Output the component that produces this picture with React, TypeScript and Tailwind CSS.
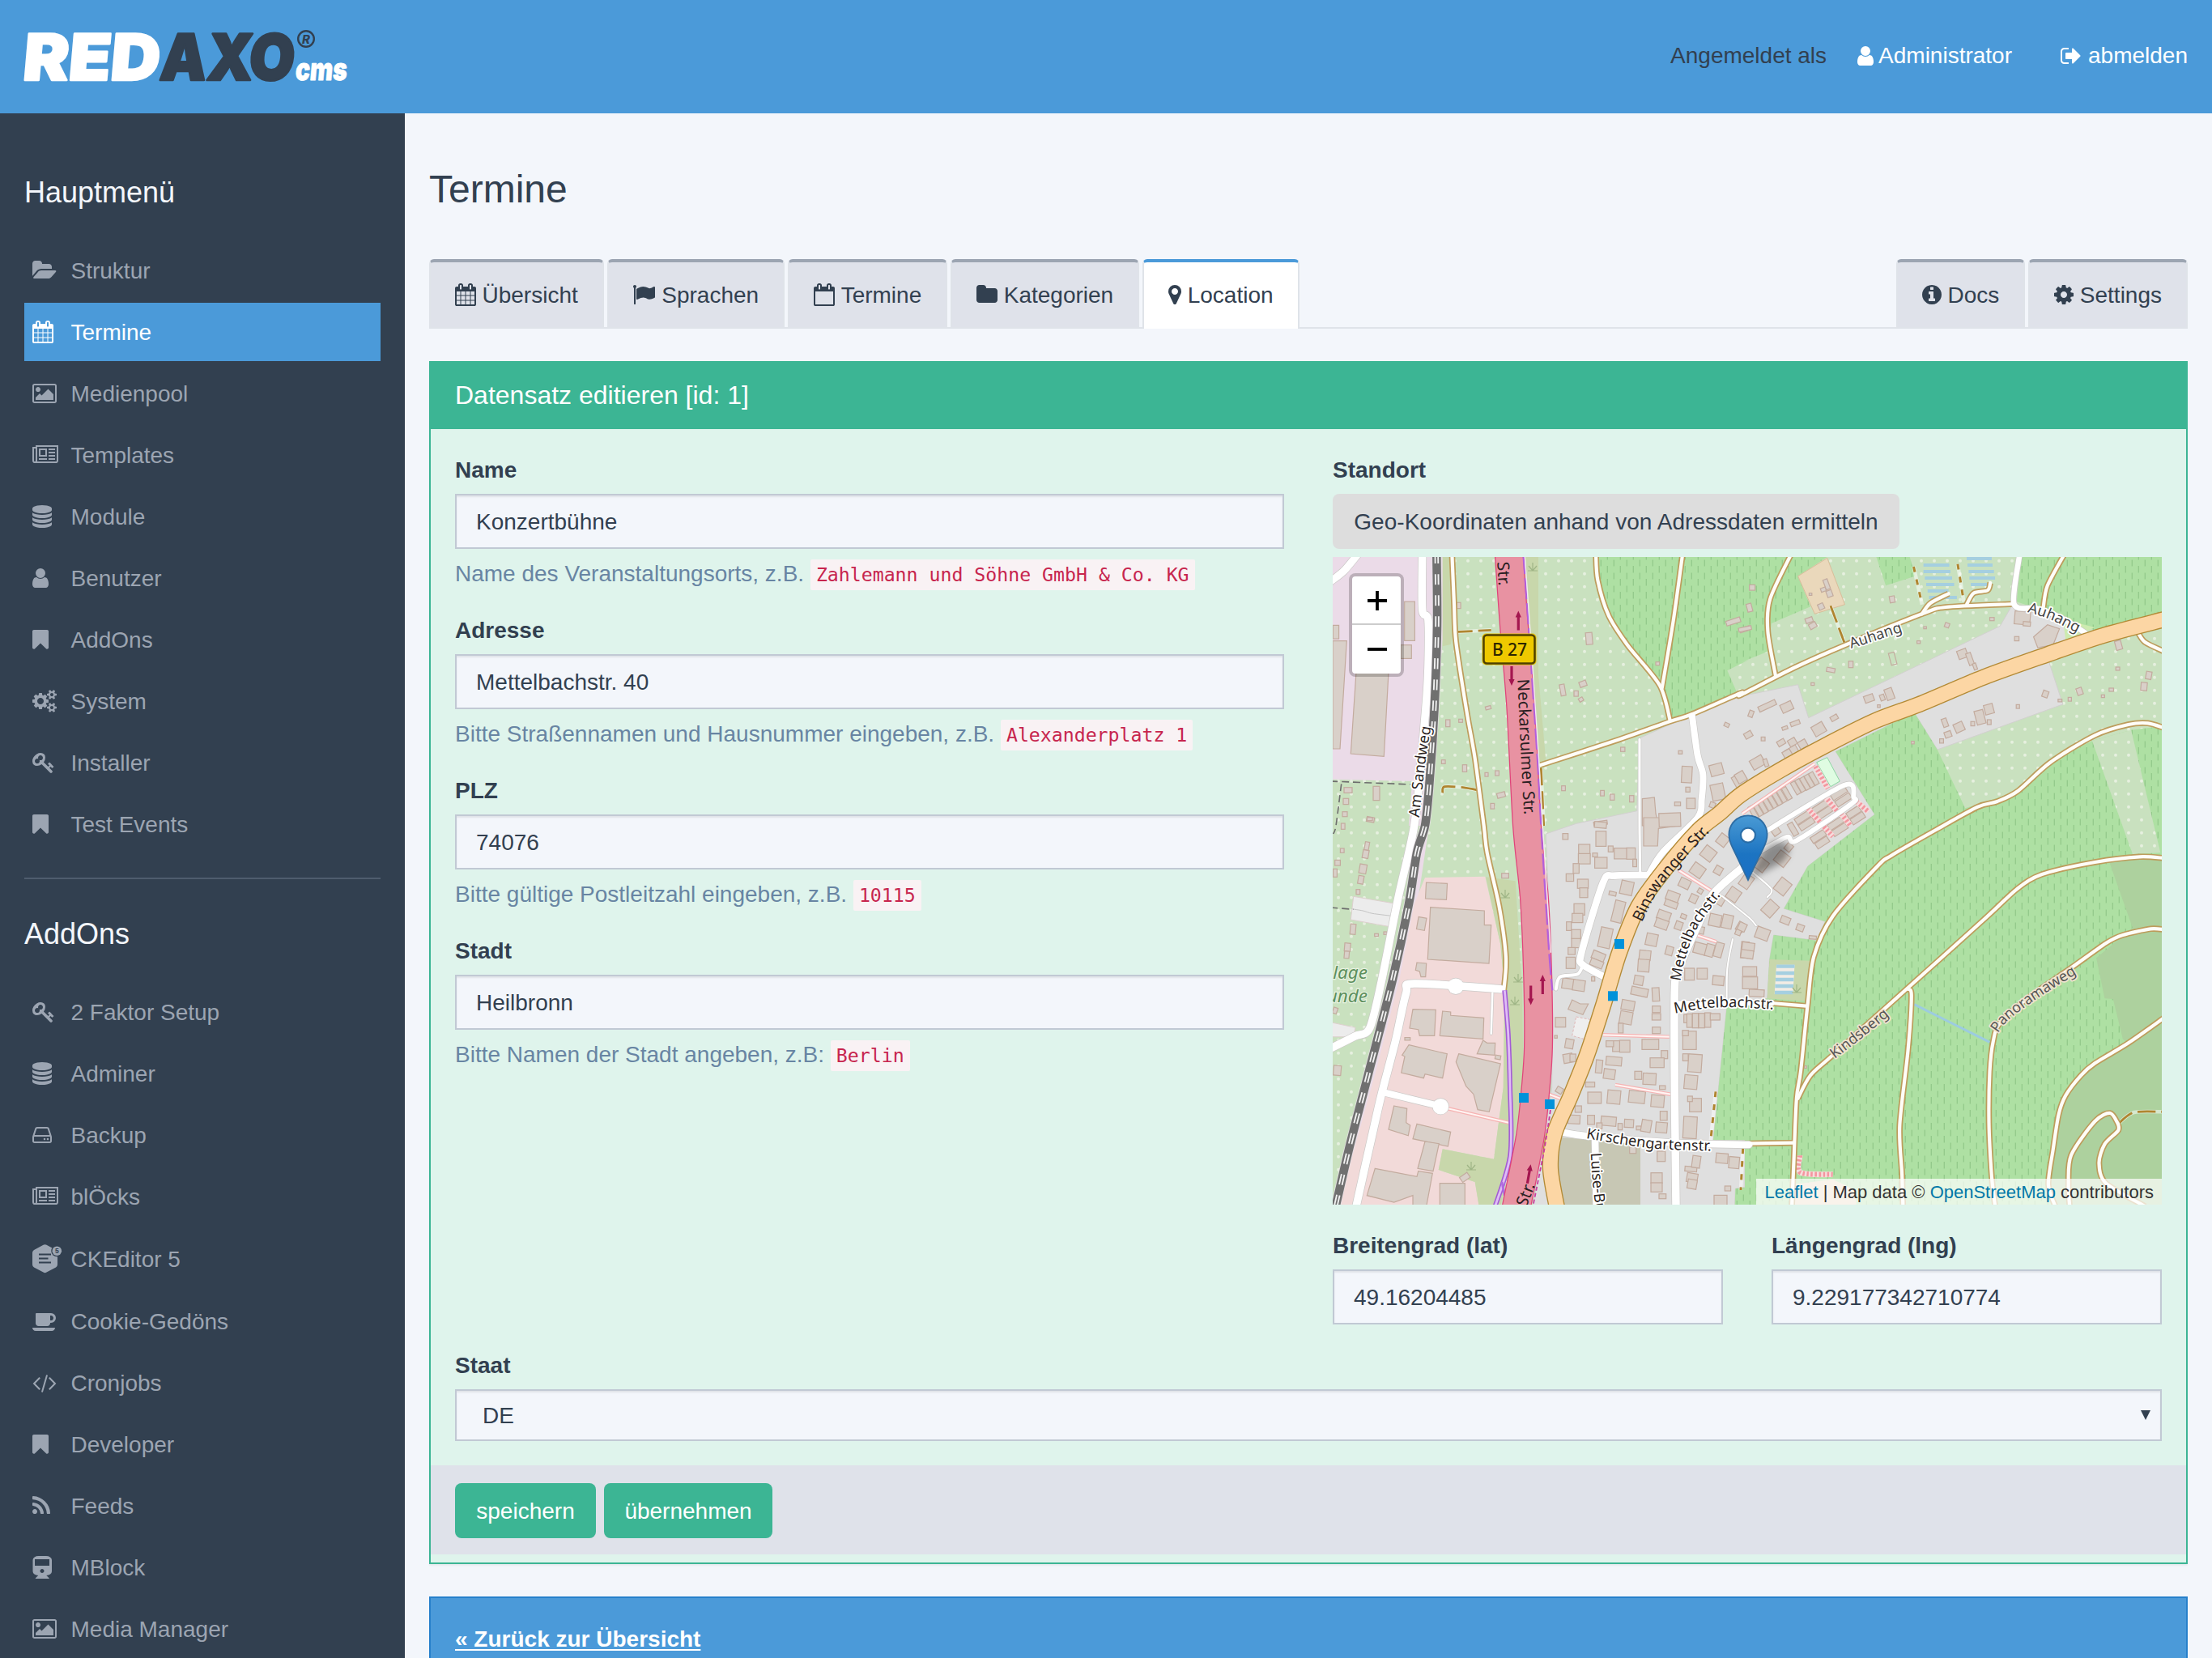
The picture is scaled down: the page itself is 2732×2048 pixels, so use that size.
import React from "react";

/* ------------------------------------------------------------------ */
/* Icons: one design unit is 1/64 px at the 28px base size             */
/* ------------------------------------------------------------------ */

type IconName =
  | "folderOpen" | "calendar" | "calendarO" | "image" | "newspaper" | "database" | "user" | "bookmark"
  | "cogs" | "key" | "hdd" | "coffee" | "code" | "rss" | "train" | "folder" | "flag" | "marker"
  | "info" | "cog" | "signOut";

const ICONS: Record<IconName, { x: number; w: number; d: string }> = {
  folderOpen: { x: 64, w: 1920, d: "M1943 952q0 31-31 66l-336 396q-43 51-120.5 86.5t-143.5 35.5h-1088q-34 0-60.5-13t-26.5-43q0-31 31-66l336-396q43-51 120.5-86.5t143.5-35.5h1088q34 0 60.5 13t26.5 43zm-343-344v160h-832q-94 0-197 47.5t-164 119.5l-337 396-5 6q0-4-.5-12.5t-.5-12.5v-960q0-92 66-158t158-66h320q92 0 158 66t66 158v32h544q92 0 158 66t66 158z" },
  calendar: { x: 64, w: 1664, d: "M192 1664h288v-288h-288v288zm352 0h320v-288h-320v288zm-352-352h288v-320h-288v320zm352 0h320v-320h-320v320zm-352-384h288v-288h-288v288zm736 736h320v-288h-320v288zm-384-736h320v-288h-320v288zm768 736h288v-288h-288v288zm-384-352h320v-320h-320v320zm-352-864v-288q0-13-9.5-22.5t-22.5-9.5h-64q-13 0-22.5 9.5t-9.5 22.5v288q0 13 9.5 22.5t22.5 9.5h64q13 0 22.5-9.5t9.5-22.5zm736 864h288v-320h-288v320zm-384-384h320v-288h-320v288zm384 0h288v-288h-288v288zm32-480v-288q0-13-9.5-22.5t-22.5-9.5h-64q-13 0-22.5 9.5t-9.5 22.5v288q0 13 9.5 22.5t22.5 9.5h64q13 0 22.5-9.5t9.5-22.5zm384-64v1280q0 52-38 90t-90 38h-1408q-52 0-90-38t-38-90v-1280q0-52 38-90t90-38h128v-96q0-66 47-113t113-47h64q66 0 113 47t47 113v96h384v-96q0-66 47-113t113-47h64q66 0 113 47t47 113v96h128q52 0 90 38t38 90z" },
  calendarO: { x: 64, w: 1664, d: "M192 1664h1408v-1024h-1408v1024zm384-1216v-288q0-14-9-23t-23-9h-64q-14 0-23 9t-9 23v288q0 14 9 23t23 9h64q14 0 23-9t9-23zm768 0v-288q0-14-9-23t-23-9h-64q-14 0-23 9t-9 23v288q0 14 9 23t23 9h64q14 0 23-9t9-23zm384-64v1280q0 52-38 90t-90 38h-1408q-52 0-90-38t-38-90v-1280q0-52 38-90t90-38h128v-96q0-66 47-113t113-47h64q66 0 113 47t47 113v96h384v-96q0-66 47-113t113-47h64q66 0 113 47t47 113v96h128q52 0 90 38t38 90z" },
  image: { x: 0, w: 1920, d: "M640 576q0 80-56 136t-136 56-136-56-56-136 56-136 136-56 136 56 56 136zm1024 384v448h-1408v-192l320-320 160 160 512-512zm96-704h-1600q-13 0-22.5 9.5t-9.5 22.5v1216q0 13 9.5 22.5t22.5 9.5h1600q13 0 22.5-9.5t9.5-22.5v-1216q0-13-9.5-22.5t-22.5-9.5zm160 32v1216q0 66-47 113t-113 47h-1600q-66 0-113-47t-47-113v-1216q0-66 47-113t113-47h1600q66 0 113 47t47 113z" },
  newspaper: { x: 0, w: 2048, d: "M1024 512h-384v384h384v-384zm128 640v128h-640v-128h640zm0-768v640h-640v-640h640zm640 768v128h-512v-128h512zm0-256v128h-512v-128h512zm0-256v128h-512v-128h512zm0-256v128h-512v-128h512zm-1536 960v-960h-128v960q0 26 19 45t45 19 45-19 19-45zm1664 0v-1088h-1536v1088q0 33-11 64h1483q26 0 45-19t19-45zm128-1216v1216q0 80-56 136t-136 56h-1664q-80 0-136-56t-56-136v-1088h256v-128h1792z" },
  database: { x: 128, w: 1536, d: "M896 768q237 0 443-43t325-127v170q0 69-103 128t-280 93.5-385 34.5-385-34.5-280-93.5-103-128v-170q119 84 325 127t443 43zm0 768q237 0 443-43t325-127v170q0 69-103 128t-280 93.5-385 34.5-385-34.5-280-93.5-103-128v-170q119 84 325 127t443 43zm0-384q237 0 443-43t325-127v170q0 69-103 128t-280 93.5-385 34.5-385-34.5-280-93.5-103-128v-170q119 84 325 127t443 43zm0-1152q208 0 385 34.5t280 93.5 103 128v128q0 69-103 128t-280 93.5-385 34.5-385-34.5-280-93.5-103-128v-128q0-69 103-128t280-93.5 385-34.5z" },
  user: { x: 256, w: 1280, d: "M1536 1399q0 109-62.5 187t-150.5 78h-854q-88 0-150.5-78t-62.5-187q0-85 8.5-160.5t31.5-152 58.5-131 94-89 134.5-34.5q131 128 313 128t313-128q76 0 134.5 34.5t94 89 58.5 131 31.5 152 8.5 160.5zm-256-887q0 159-112.5 271.5t-271.5 112.5-271.5-112.5-112.5-271.5 112.5-271.5 271.5-112.5 271.5 112.5 112.5 271.5z" },
  bookmark: { x: 256, w: 1280, d: "M1420 128q23 0 44 9 33 13 52.5 41t19.5 62v1289q0 34-19.5 62t-52.5 41q-19 8-44 8-48 0-83-32l-441-424-441 424q-36 33-83 33-23 0-44-9-33-13-52.5-41t-19.5-62v-1289q0-34 19.5-62t52.5-41q21-9 44-9h1048z" },
  cogs: { x: -64, w: 1920, d: "M832 896q0-106-75-181t-181-75-181 75-75 181 75 181 181 75 181-75 75-181zm768 512q0-52-38-90t-90-38-90 38-38 90q0 53 37.5 90.5t90.5 37.5 90.5-37.5 37.5-90.5zm0-1024q0-52-38-90t-90-38-90 38-38 90q0 53 37.5 90.5t90.5 37.5 90.5-37.5 37.5-90.5zm-384 421v185q0 10-7 19.5t-16 10.5l-155 24q-11 35-32 76 34 48 90 115 7 11 7 20 0 12-7 19-23 30-82.5 89.5t-78.5 59.5q-11 0-21-7l-115-90q-37 19-77 31-11 108-23 155-7 24-30 24h-186q-11 0-20-7.5t-10-17.5l-23-153q-34-10-75-31l-118 89q-7 7-20 7-11 0-21-8-144-133-144-160 0-9 7-19 10-14 41-53t47-61q-23-44-35-82l-152-24q-10-1-17-9.5t-7-19.5v-185q0-10 7-19.5t16-10.5l155-24q11-35 32-76-34-48-90-115-7-11-7-20 0-12 7-20 22-30 82-89t79-59q11 0 21 7l115 90q34-18 77-32 11-108 23-154 7-24 30-24h186q11 0 20 7.5t10 17.5l23 153q34 10 75 31l118-89q8-7 20-7 11 0 21 8 144 133 144 160 0 8-7 19-12 16-42 54t-45 60q23 48 34 82l152 23q10 2 17 10.5t7 19.5zm640 533v140q0 16-149 31-12 27-30 52 51 113 51 138 0 4-4 7-122 71-124 71-8 0-46-47t-52-68q-20 2-30 2t-30-2q-14 21-52 68t-46 47q-2 0-124-71-4-3-4-7 0-25 51-138-18-25-30-52-149-15-149-31v-140q0-16 149-31 13-29 30-52-51-113-51-138 0-4 4-7 4-2 35-20t59-34 30-16q8 0 46 46.5t52 67.5q20-2 30-2t30 2q51-71 92-112l6-2q4 0 124 70 4 3 4 7 0 25-51 138 17 23 30 52 149 15 149 31zm0-1024v140q0 16-149 31-12 27-30 52 51 113 51 138 0 4-4 7-122 71-124 71-8 0-46-47t-52-68q-20 2-30 2t-30-2q-14 21-52 68t-46 47q-2 0-124-71-4-3-4-7 0-25 51-138-18-25-30-52-149-15-149-31v-140q0-16 149-31 13-29 30-52-51-113-51-138 0-4 4-7 4-2 35-20t59-34 30-16q8 0 46 46.5t52 67.5q20-2 30-2t30 2q51-71 92-112l6-2q4 0 124 70 4 3 4 7 0 25-51 138 17 23 30 52 149 15 149 31z" },
  key: { x: 0, w: 1664, d: "M832 512q0-80-56-136t-136-56-136 56-56 136q0 42 19 83-41-19-83-19-80 0-136 56t-56 136 56 136 136 56 136-56 56-136q0-42-19-83 41 19 83 19 80 0 136-56t56-136zm851 704q0 17-49 66t-66 49q-9 0-28.5-16t-36.5-33-38.5-40-24.5-26l-96 96 220 220q28 28 28 68 0 42-39 81t-81 39q-40 0-68-28l-671-671q-176 131-365 131-163 0-265.5-102.5t-102.5-265.5q0-160 95-313t248-248 313-95q163 0 265.5 102.5t102.5 265.5q0 189-131 365l355 355 96-96q-3-3-26-24.5t-40-38.5-33-36.5-16-28.5q0-17 49-66t66-49q13 0 23 10 6 6 46 44.5t82 79.5 86.5 86 73 78 28.5 41z" },
  hdd: { x: 128, w: 1536, d: "M1168 1216q0 33-23.5 56.5t-56.5 23.5-56.5-23.5-23.5-56.5 23.5-56.5 56.5-23.5 56.5 23.5 23.5 56.5zm256 0q0 33-23.5 56.5t-56.5 23.5-56.5-23.5-23.5-56.5 23.5-56.5 56.5-23.5 56.5 23.5 23.5 56.5zm112 160v-320q0-13-9.5-22.5t-22.5-9.5h-1216q-13 0-22.5 9.5t-9.5 22.5v320q0 13 9.5 22.5t22.5 9.5h1216q13 0 22.5-9.5t9.5-22.5zm-1230-480h1180l-157-482q-4-13-16-21.5t-26-8.5h-782q-14 0-26 8.5t-16 21.5zm1358 160v320q0 66-47 113t-113 47h-1216q-66 0-113-47t-47-113v-320q0-25 16-75l197-606q17-53 63-86t101-33h782q55 0 101 33t63 86l197 606q16 50 16 75z" },
  coffee: { x: 0, w: 1920, d: "M1664 640q0-80-56-136t-136-56h-64v384h64q80 0 136-56t56-136zm-1664 768h1792q0 106-75 181t-181 75h-1280q-106 0-181-75t-75-181zm1856-768q0 159-112.5 271.5t-271.5 112.5h-64v32q0 92-66 158t-158 66h-704q-92 0-158-66t-66-158v-736q0-26 19-45t45-19h1152q159 0 271.5 112.5t112.5 271.5z" },
  code: { x: 64, w: 1920, d: "M681 1399l-50 50q-10 10-23 10t-23-10l-466-466q-10-10-10-23t10-23l466-466q10-10 23-10t23 10l50 50q10 10 10 23t-10 23l-393 393 393 393q10 10 10 23t-10 23zm591-1067l-373 1291q-4 13-15.5 19.5t-23.5 2.5l-62-17q-13-4-19.5-15.5t-2.5-24.5l373-1291q4-13 15.5-19.5t23.5-2.5l62 17q13 4 19.5 15.5t2.5 24.5zm657 651l-466 466q-10 10-23 10t-23-10l-50-50q-10-10-10-23t10-23l393-393-393-393q-10-10-10-23t10-23l50-50q10-10 23-10t23 10l466 466q10 10 10 23t-10 23z" },
  rss: { x: 192, w: 1408, d: "M576 1344q0 80-56 136t-136 56-136-56-56-136 56-136 136-56 136 56 56 136zm512 123q2 28-17 48-18 21-47 21h-135q-25 0-43-16.5t-20-41.5q-22-229-184.5-391.5t-391.5-184.5q-25-2-41.5-20t-16.5-43v-135q0-29 21-47 17-17 43-17h5q160 13 306 80.5t259 181.5q114 113 181.5 259t80.5 306zm512 2q2 27-18 47-18 20-46 20h-143q-26 0-44.5-17.5t-19.5-42.5q-12-215-101-408.5t-231.5-336-336-231.5-408.5-102q-25-1-42.5-19.5t-17.5-43.5v-143q0-28 20-46 18-18 44-18h3q262 13 501.5 120t425.5 294q187 186 294 425.5t120 501.5z" },
  train: { x: 0, w: 1536, d: "M1088 0q185 0 316.5 93.5t131.5 226.5v896q0 130-125.5 222t-305.5 97l213 202q16 15 8 35t-30 20h-1024q-22 0-30-20t8-35l213-202q-180-5-305.5-97t-125.5-222v-896q0-133 131.5-226.5t316.5-93.5h640zm-320 1344q66 0 113-47t47-113-47-113-113-47-113 47-47 113 47 113 113 47zm576-576v-512h-1152v512h1152z" },
  folder: { x: 64, w: 1664, d: "M1728 608v704q0 92-66 158t-158 66h-1216q-92 0-158-66t-66-158v-960q0-92 66-158t158-66h320q92 0 158 66t66 158v32h672q92 0 158 66t66 158z" },
  flag: { x: 64, w: 1792, d: "M320 256q0 72-64 110v1266q0 13-9.5 22.5t-22.5 9.5h-64q-13 0-22.5-9.5t-9.5-22.5v-1266q-64-38-64-110 0-53 37.5-90.5t90.5-37.5 90.5 37.5 37.5 90.5zm1472 64v763q0 25-12.5 38.5t-39.5 27.5q-215 116-369 116-61 0-123.5-22t-108.5-48-115.5-48-142.5-22q-192 0-464 146-17 9-33 9-26 0-45-19t-19-45v-742q0-32 31-55 21-14 79-43 236-120 421-120 107 0 200 29t219 88q38 19 88 19 54 0 117.5-21t110-47 88-47 54.5-21q26 0 45 19t19 45z" },
  marker: { x: 384, w: 1024, d: "M1152 640q0-106-75-181t-181-75-181 75-75 181 75 181 181 75 181-75 75-181zm256 0q0 109-33 179l-364 774q-16 33-47.5 52t-67.5 19-67.5-19-46.5-52l-365-774q-33-70-33-179 0-212 150-362t362-150 362 150 150 362z" },
  info: { x: 128, w: 1536, d: "M1152 1376v-160q0-14-9-23t-23-9h-96v-512q0-14-9-23t-23-9h-320q-14 0-23 9t-9 23v160q0 14 9 23t23 9h96v320h-96q-14 0-23 9t-9 23v160q0 14 9 23t23 9h448q14 0 23-9t9-23zm-128-896v-160q0-14-9-23t-23-9h-192q-14 0-23 9t-9 23v160q0 14 9 23t23 9h192q14 0 23-9t9-23zm640 416q0 209-103 385.5t-279.5 279.5-385.5 103-385.5-103-279.5-279.5-103-385.5 103-385.5 279.5-279.5 385.5-103 385.5 103 279.5 279.5 103 385.5z" },
  cog: { x: 128, w: 1536, d: "M1152 896q0-106-75-181t-181-75-181 75-75 181 75 181 181 75 181-75 75-181zm512-109v222q0 12-8 23t-20 13l-185 28q-19 54-39 91 35 50 107 138 10 12 10 25t-9 23q-27 37-99 108t-94 71q-12 0-26-9l-138-108q-44 23-91 38-16 136-29 186-7 28-36 28h-222q-14 0-24.5-8.5t-11.5-21.5l-28-184q-49-16-90-37l-141 107q-10 9-25 9-14 0-25-11-126-114-165-168-7-10-7-23 0-12 8-23 15-21 51-66.5t54-70.5q-27-50-41-99l-183-27q-13-2-21-12.5t-8-23.5v-222q0-12 8-23t19-13l186-28q14-46 39-92-40-57-107-138-10-12-10-24 0-10 9-23 26-36 98.5-107.5t94.5-71.5q13 0 26 10l138 107q44-23 91-38 16-136 29-186 7-28 36-28h222q14 0 24.5 8.5t11.5 21.5l28 184q49 16 90 37l142-107q9-9 24-9 13 0 25 10 129 119 165 170 7 8 7 22 0 12-8 23-15 21-51 66.5t-54 70.5q26 50 41 98l183 28q13 2 21 12.5t8 23.5z" },
  signOut: { x: 64, w: 1568, d: "M704 1440q0 4 1 20t.5 26.5-3 23.5-10 19.5-20.5 6.5h-320q-119 0-203.5-84.5t-84.5-203.5v-704q0-119 84.5-203.5t203.5-84.5h320q13 0 22.5 9.5t9.5 22.5q0 4 1 20t.5 26.5-3 23.5-10 19.5-20.5 6.5h-320q-66 0-113 47t-47 113v704q0 66 47 113t113 47h312l11.5 1 11.5 3 8 5.5 7 9 2 13.5zm928-544q0 26-19 45l-544 544q-19 19-45 19t-45-19-19-45v-288h-448q-26 0-45-19t-19-45v-384q0-26 19-45t45-19h448v-288q0-26 19-45t45-19 45 19l544 544q19 19 19 45z" },
};

function Icon({ name }: { name: IconName }) {
  const icon = ICONS[name];
  return (
    <svg
      className="block shrink-0 overflow-visible fill-current"
      width={icon.w / 64}
      height={28}
      viewBox={`${icon.x} 0 ${icon.w} 1792`}
      aria-hidden="true"
    >
      <path d={icon.d} />
    </svg>
  );
}

function EditorIcon() {
  return (
    <svg className="block shrink-0 overflow-visible" width={36} height={36} viewBox="0 0 36 36" aria-hidden="true">
      <path
        d="M13.5.8q2-1.100 4 0l11.500 6.200q2 1.100 2 3.400v14.600q0 2.300-2 3.400l-11.500 6.200q-2 1.100-4 0L2 28.400q-2-1.100-2-3.400V10.400Q0 8.100 2 7z"
        fill="#9ca5b2"
      />
      <path d="M8 12.5h15M8 17.500h11.500M8 22.500h15" stroke="#324050" strokeWidth="1.800" />
      <circle cx="30.300" cy="8.200" r="7" fill="#324050" />
      <circle cx="30.300" cy="8.200" r="5.800" fill="#9ca5b2" />
      <text x="30.300" y="11.300" textAnchor="middle" className="font-['Liberation_Sans',sans-serif] text-[8.500px] font-bold" fill="#324050">
        5
      </text>
    </svg>
  );
}

function Logo() {
  return (
    <svg className="block overflow-visible" width={440} height={110} viewBox="28 20 440 110" aria-label="REDAXO cms">
      <g className="font-['Inter',sans-serif] font-black" strokeWidth="2.600" strokeLinejoin="round">
        <g transform="translate(27 99) skewX(-5)">
          <text x="0" y="0" fontSize="79" textLength="169" lengthAdjust="spacingAndGlyphs" fill="#fff" stroke="#fff">RED</text>
          <text x="169" y="0" fontSize="79" textLength="166" lengthAdjust="spacingAndGlyphs" fill="#324050" stroke="#324050">AXO</text>
          <text x="337" y="0" fontSize="38" textLength="64" lengthAdjust="spacingAndGlyphs" fill="#fff" stroke="#fff" strokeWidth="0.800">cms</text>
        </g>
      </g>
      <circle cx="378" cy="48" r="9.800" fill="none" stroke="#324050" strokeWidth="2.400" />
      <text x="378" y="53.500" textAnchor="middle" fontSize="15" className="font-['Inter',sans-serif] font-extrabold italic" fill="#324050">R</text>
    </svg>
  );
}

/* ------------------------------------------------------------------ */
/* Map                                                                 */
/* ------------------------------------------------------------------ */

type Pt = [number, number];

/* The map is surveyed on four sheets: origin x, origin y, units per px. */
const SHEETS: Record<string, [number, number, number, number]> = {
  A: [1640, 540, 3, 3],
  B: [2150, 680, 2.9037, 3],
  C: [1640, 1010, 3, 3],
  D: [2150, 1070, 2.9037, 3],
};

function toPoints(src: string): Pt[] {
  let sheet = SHEETS.A;
  const out: Pt[] = [];
  for (const token of src.trim().split(/\s+/)) {
    if (SHEETS[token]) {
      sheet = SHEETS[token];
      continue;
    }
    const [x, y] = token.split(",").map(Number);
    out.push([sheet[0] + x / sheet[2], sheet[1] + y / sheet[3]]);
  }
  return out;
}

const r1 = (n: number) => Math.round(n * 10) / 10;

function area(src: string) {
  return "M" + toPoints(src).map(([x, y]) => `${r1(x)} ${r1(y)}`).join("L") + "Z";
}

function line(src: string) {
  const p = toPoints(src);
  let d = `M${r1(p[0][0])} ${r1(p[0][1])}`;
  for (let i = 0; i < p.length - 1; i++) {
    const a = p[Math.max(i - 1, 0)];
    const b = p[i];
    const c = p[i + 1];
    const e = p[Math.min(i + 2, p.length - 1)];
    const k = 7;
    d += `C${r1(b[0] + (c[0] - a[0]) / k)} ${r1(b[1] + (c[1] - a[1]) / k)} ${r1(c[0] - (e[0] - b[0]) / k)} ${r1(c[1] - (e[1] - b[1]) / k)} ${r1(c[0])} ${r1(c[1])}`;
  }
  return d;
}

const VINEYARDS = [
  "A 1003,440 1000,530 1040,660 1110,770 1230,920 1270,1050 1340,1025 1515,945 1480,865 1560,825 B 0,415 95,375 110,270 250,208 205,95 315,20",
  "B 485,20 520,130 625,95 605,20",
  "B 1005,20 1515,20 1515,232 1280,300 1160,250 990,190",
  "B 340,745 622,600 705,738 805,955 1000,890 1100,790 1260,705 1400,665 1515,650 D 1515,1260 0,1260 C 1508,1440 1510,1375 1545,1370 1545,1195 1428,1195 1478,700 D 0,510 95,490 103,345 118,255 272,275 303,205 155,157 240,0 B 480,978",
];

const RESIDENTIAL =
  "B 970,208 1165,260 1170,330 1105,412 1155,570 705,738 622,600 340,745 480,978 240,1170 D 155,157 303,205 272,275 118,255 103,345 95,490 0,510 C 1478,700 1428,1195 1545,1195 1545,1370 1510,1375 1508,1440 760,1440 830,1000 830,600 808,60 A 920,1432 1145,1385 1155,1115 1345,1030 1515,945 1560,930 B 0,540 205,497 243,620 930,280";

const FOREST =
  "B 1320,1150 1430,1135 1515,1140 D 1515,0 1515,1260 1130,1260 1103,1180 1120,1050 1140,920 1165,850 1220,775 1270,730 1385,655 1370,640 1335,492 1305,490 1275,340 1405,228";

const SCRUB = [
  "A 425,440 455,440 470,700 455,768 425,775",
  "A 725,440 780,440 780,880 808,1200 790,1225 770,1215 740,700",
  "C 585,220 695,235 720,640 725,1000 640,1440 560,1440 545,1350 410,1305 425,1228 615,1265 650,1000 655,640 640,470",
  "D 103,345 250,350 240,500 95,490",
];

const TRACKS = [
  "A 460,430 468,620 475,760 515,1020 545,1190 578,1440 C 590,130 635,330 660,520 652,640",
  "A 993,430 1000,530 1040,660 1110,770 1230,920 1268,1050",
  "A 1315,430 1280,680 1238,930",
  "A 788,1215 1080,1120 1268,1053 1345,1028 1530,948 B 0,535 190,435 375,350 650,235 735,210 980,198",
  "B 180,15 105,180 97,300 125,465",
  "B 650,235 680,195 745,160",
  "B 810,200 835,158 885,148 895,120",
  "B 1160,15 1100,130 1085,210",
  "B 1520,375 1450,340 1425,305",
  "B 1520,658 1460,640 1390,645 1270,685 1110,785 995,890 920,930 850,950 700,1035 540,1130 D 490,0 330,185 262,335 240,510 215,760 200,860 190,1100 183,1265",
  "B 1520,1140 1430,1135 1270,1155 D 1080,30 990,85 880,190 600,450 330,700 250,775 205,860",
  "D 600,455 612,480 600,680 570,960 578,1140 582,1265",
  "D 1520,235 1470,232 1370,255 1310,285 1180,380 1040,480 930,580 905,650 893,760 890,950 900,1150 913,1265",
  "D 1520,560 1390,655 1270,730 1220,775 1165,850 1140,920 1120,1050 1103,1180 1130,1265",
  "D 1353,955 1325,915 1270,945 1185,1070 1175,1180 1180,1265",
  "D 1353,955 1353,980 1305,1030 1285,1100 1310,1175 1450,1260",
  "D 0,1028 190,1025",
  "D 110,507 235,518",
];

/* path, width */
const STREETS: [string, number][] = [
  ["A 350,430 350,640 372,680 370,900 350,1150 320,1440 C 260,300 200,600 155,780 100,810 10,855", 9.5],
  ["A 10,535 60,495 110,435", 9],
  ["C 640,635 320,615 290,650 250,830 200,1020 170,1150 105,1440", 9.5],
  ["C 215,1020 420,1070", 8],
  ["C 1560,165 1430,280 1370,400 1300,560 1285,640 1285,1000 1290,1440", 9.5],
  ["B 10,1135 60,1120 165,1062 200,1075 395,940 405,915 370,870 60,1060 20,1090", 6],
  ["C 1190,213 1060,215 1020,240 940,500 945,545 1025,590", 8.5],
  ["C 945,545 925,580 860,590 845,635", 4],
  ["C 1190,210 1240,130 1370,0 A 1385,1340 1390,1250 1370,1180 1350,1035", 8],
  ["C 865,1165 960,1180 1285,1205 1560,1212", 8.5],
  ["C 990,1190 995,1440", 8.5],
  ["B 1000,15 980,198 1060,215 1150,250 1235,305", 6.5],
  ["C 1285,690 1560,685 D 110,507", 7],
  ["A 1155,1120 1155,1440 C 1157,205", 3],
  ["C 610,650 605,800", 2.5],
  ["C 1285,1140 1285,1200", 4],
  ["C 1500,450 1480,560 1478,700", 2],
  ["C 1460,290 1560,370 D 55,220", 2],
  ["D 40,20 110,85 95,115", 2],
];

const MAIN_ROAD =
  "C 850,1450 825,1300 840,1170 900,1030 960,880 1025,680 1080,500 1150,330 1250,190 1370,50 1450,-15 B 0,905 140,815 290,730 480,632 640,570 870,470 1100,385 1300,315 1520,255";

const MOTORWAY =
  "A 671,430 690,700 715,1000 738,1440 C 765,300 778,600 780,850 770,1000 750,1180 698,1445";

const RAIL = "A 403,430 405,700 395,1000 375,1300 360,1440 C 330,130 300,320 240,600 150,950 80,1220 28,1445";

const FOOTWAYS = [
  "A 470,722 605,715",
  "A 425,1318 432,1295 500,1298 565,1310",
  "A 790,1225 800,1440",
  "B 322,205 375,350",
  "B 620,60 650,200",
  "B 778,50 800,190",
  "C 1437,1015 1418,1200",
  "C 1538,1225 1530,1380",
  "D 1353,955 1410,912 1520,910",
];

const BUILDING_SHAPES = [
  "A 18,755 70,755 45,1155 18,1155",
  "A 105,870 225,870 208,1183 85,1173",
  "C 380,332 580,345 580,398 605,398 597,540 370,525",
  "C 330,537 365,540 362,590 345,590 340,570 325,565",
  "C 315,710 400,712 395,808 340,808 335,785 303,780",
  "C 425,717 455,720 455,733 578,742 575,820 415,808",
  "C 300,842 442,875 425,965 360,950 355,965 272,945 285,885 275,880",
  "C 485,875 640,912 598,1090 555,1082 540,1025 512,995 475,905",
  "C 575,825 590,835 620,835 618,880 553,875",
  "C 245,1068 293,1078 290,1130 305,1140 298,1178 225,1155",
  "C 330,1135 455,1165 445,1218 315,1190",
  "C 360,1200 412,1208 390,1310 333,1300",
  "C 175,1300 330,1330 335,1310 388,1318 365,1440 315,1440 315,1400 245,1425 145,1400",
  "C 415,1355 508,1355 508,1440 415,1440",
  "A 1165,1340 1210,1335 1215,1395 1225,1440 1165,1440",
  "C 1170,0 1300,0 1300,30 1225,40 1222,105 1170,105",
  "B 1050,320 1100,275 1143,290 1120,350 1065,360",
  "C 890,710 905,675 935,690 965,690 945,730",
];

/* Rectangular buildings per sheet: centre x, centre y, width, height, rotation */
const HOUSES: Record<string, number[][]> = {
  A: [
    [303, 682, 38, 145], [290, 795, 40, 50], [30, 722, 22, 50], [485, 624, 14, 22], [968, 746, 24, 44, -5], [945, 914, 26, 20, -20],
    [870, 937, 18, 42, -10], [920, 950, 16, 20], [938, 972, 16, 14, -30], [594, 1003, 20, 12, -15], [445, 1060, 16, 26], [492, 1051, 14, 12],
    [428, 1203, 14, 14], [507, 1227, 16, 26], [588, 1250, 12, 14], [627, 1245, 14, 18], [642, 1326, 30, 18, -15], [610, 1367, 14, 20],
    [873, 1301, 14, 18], [1017, 1319, 14, 20], [1054, 1334, 16, 22], [1126, 1340, 16, 24], [1093, 1157, 16, 16], [1222, 839, 14, 12],
    [1502, 683, 54, 18, -18], [1545, 712, 38, 16, -18], [1478, 1066, 18, 14, 25], [1306, 1168, 14, 12], [1330, 1250, 38, 60, 3],
    [1440, 1232, 48, 42, -15], [1525, 1270, 46, 42, -30], [1445, 1315, 48, 60, -12], [1345, 1357, 32, 38], [1296, 1359, 22, 14],
    [1334, 1306, 16, 18], [1425, 1363, 20, 20, 20], [1267, 1418, 80, 50, -2], [75, 1308, 30, 20], [180, 1320, 24, 52], [67, 1350, 20, 22],
    [158, 1417, 28, 18, 10], [63, 1397, 18, 18], [1010, 1430, 50, 14, -8],
  ],
  B: [
    [41, 137, 20, 20], [31, 212, 18, 30, -15], [15, 290, 46, 14, -12], [288, 208, 20, 22, -25], [308, 125, 16, 38, -20], [318, 160, 20, 24, -20],
    [296, 145, 18, 14, -20], [250, 162, 10, 8], [245, 258, 26, 18, -20], [258, 278, 26, 20, -30], [543, 181, 18, 24, -10], [661, 286, 10, 8], [740, 277, 16, 16, 20],
    [638, 340, 12, 10], [901, 254, 16, 12], [990, 327, 16, 16], [1010, 250, 56, 48, 5], [1026, 272, 26, 16, 5], [395, 422, 16, 24],
    [323, 443, 30, 16, 10], [258, 495, 12, 10], [795, 383, 34, 32, -20], [822, 402, 18, 46, -20], [840, 430, 12, 24, -20],
    [460, 548, 34, 26, -20], [508, 545, 16, 22, -20], [533, 532, 28, 42, -20], [495, 577, 10, 10], [335, 620, 26, 18, -30], [280, 662, 44, 40, -30],
    [165, 580, 42, 32, -25], [95, 575, 66, 20, -25], [37, 605, 16, 24, 20], [27, 683, 28, 22, -30], [80, 698, 14, 14], [145, 712, 28, 20, -30],
    [185, 710, 28, 26, -30], [195, 640, 34, 16, -20], [158, 658, 20, 12, -20], [185, 748, 44, 38, -30], [222, 718, 30, 28, -30], [168, 755, 30, 32, -30],
    [60, 785, 48, 38, -30], [90, 787, 14, 28, -20], [0, 840, 34, 38, -30], [732, 638, 18, 32, -20], [743, 682, 24, 22, -20], [783, 655, 34, 34, -25],
    [720, 706, 14, 16], [832, 642, 14, 16], [858, 618, 32, 52, -15], [890, 588, 32, 36, -15], [891, 636, 14, 18], [994, 578, 12, 14],
    [1092, 532, 20, 24, 20], [1145, 556, 14, 10], [1180, 551, 12, 14], [1215, 522, 20, 26, -20], [1299, 540, 12, 10], [1329, 516, 16, 12],
    [1352, 438, 14, 12], [1355, 351, 22, 34, -15], [1463, 463, 20, 28, 10], [1446, 504, 22, 30, 5], [617, 712, 10, 10],
    [197, 880, 17, 50, -30], [213, 871, 17, 50, -30], [230, 863, 17, 50, -30], [246, 854, 17, 50, -30], [262, 845, 17, 50, -30],
    [45, 970, 17, 50, -30], [62, 960, 17, 50, -30], [79, 950, 17, 50, -30], [96, 940, 17, 50, -30], [113, 930, 17, 50, -30], [130, 920, 17, 50, -30],
    [147, 910, 17, 50, -30], [165, 900, 17, 50, -30], [352, 900, 60, 24, -33], [368, 924, 60, 24, -33], [285, 950, 60, 24, -33], [299, 972, 60, 24, -33],
    [222, 990, 58, 24, -33], [236, 1013, 58, 24, -33], [340, 1012, 58, 24, -33], [355, 1034, 58, 24, -33], [405, 970, 52, 24, -33],
    [420, 992, 52, 24, -33], [278, 1060, 56, 24, -33], [292, 1082, 50, 24, -33], [187, 1033, 20, 50, -30], [127, 1042, 28, 24, -35],
    [148, 1142, 46, 46, 38], [172, 1100, 24, 28, 40], [75, 1165, 38, 44, 38],
  ],
  C: [
    [402, 272, 78, 60, 3], [347, 393, 30, 46, 10], [508, 1333, 34, 22, -35], [295, 820, 20, 10], [630, 888, 20, 14, 10], [657, 215, 26, 18],
    [950, 120, 42, 42], [950, 152, 44, 38], [920, 188, 22, 36], [897, 222, 28, 28], [945, 245, 40, 34], [948, 278, 30, 36], [1010, 27, 44, 22, 5],
    [1012, 78, 38, 56], [1012, 167, 46, 40], [990, 138, 18, 14], [1085, 133, 48, 40], [1123, 133, 32, 42], [1137, 168, 14, 28], [1048, 116, 18, 22],
    [880, 70, 20, 22], [932, 340, 40, 42], [925, 372, 40, 34], [893, 402, 18, 32], [920, 432, 34, 34], [920, 465, 34, 34], [903, 494, 26, 26],
    [900, 538, 34, 42], [1108, 260, 46, 50, 12], [1055, 281, 26, 14, 12], [1076, 348, 38, 80, 14], [1028, 445, 44, 74, 12], [1003, 513, 48, 30, 22],
    [996, 540, 48, 26, 22], [890, 615, 44, 38, 8], [930, 622, 44, 40, 8], [983, 598, 12, 16], [862, 758, 38, 36], [895, 838, 30, 34, 10], [890, 892, 34, 34, -10],
    [908, 890, 22, 28], [845, 812, 10, 10], [858, 1010, 24, 22, 30], [1410, 133, 48, 46, 38], [1463, 83, 38, 40, 38], [1370, 195, 48, 44, 35], [1447, 195, 28, 30, 30], [1322, 244, 40, 34, 25],
    [1278, 292, 48, 34, 20], [1272, 320, 48, 24, 20], [1245, 363, 48, 34, 20], [1237, 394, 48, 34, 20], [1200, 452, 42, 44, 12], [1175, 510, 42, 36, 6],
    [1170, 548, 42, 46, 4], [1152, 603, 34, 34, 10], [1155, 645, 62, 30, 12], [1215, 655, 26, 50, -3], [1112, 695, 48, 36, 10], [1105, 742, 46, 46, 10],
    [1085, 780, 18, 36], [1217, 710, 30, 24], [1217, 738, 32, 24], [1217, 788, 30, 24], [1503, 285, 44, 46, 35], [1355, 300, 28, 30, 25],
    [1380, 272, 18, 18, 30], [1300, 400, 26, 30, 20], [1318, 366, 20, 16, 20], [1265, 493, 26, 32, 15], [1435, 380, 44, 44, 12], [1480, 385, 38, 50, 12], [1530, 405, 28, 34, 30],
    [1520, 425, 20, 20, 20], [1385, 418, 18, 26, 10], [1380, 485, 48, 40, 15], [1415, 492, 30, 46, 15], [1448, 490, 30, 54, 15], [1340, 580, 36, 44], [1387, 578, 38, 40],
    [1447, 604, 42, 34, 5], [1545, 490, 28, 60, 5], [1455, 310, 24, 30, 30], [1329, 745, 20, 30], [1340, 752, 20, 50], [1362, 752, 22, 54], [1385, 752, 22, 54], [1408, 750, 22, 54],
    [1435, 738, 36, 24], [1340, 825, 50, 68], [1325, 798, 22, 20], [1360, 910, 50, 66, 4], [1325, 888, 20, 26], [1345, 980, 48, 52, 5], [1362, 1065, 44, 50], [1342, 1042, 18, 20],
    [1342, 1148, 50, 80, 3], [1195, 840, 62, 38], [1247, 878, 24, 30], [1220, 908, 52, 36], [1150, 955, 26, 30], [1192, 968, 48, 42, 3], [1222, 1050, 48, 44, 5],
    [1240, 1000, 22, 14], [1145, 1035, 60, 44, 6], [1060, 1035, 48, 50, 5], [988, 1038, 50, 42], [972, 989, 34, 18], [1070, 847, 30, 40], [1100, 847, 38, 44],
    [1045, 838, 28, 22], [1060, 902, 58, 32, 5], [1005, 922, 24, 48, 5], [1043, 950, 42, 36, 8], [928, 1080, 24, 24], [912, 1118, 44, 32, 3],
    [975, 1120, 26, 34], [1040, 1125, 56, 34, 5], [1006, 1142, 20, 22], [1083, 1145, 16, 24], [1116, 1133, 34, 30, 3], [1152, 1150, 18, 14], [1180, 1142, 36, 44, 10], [1236, 1148, 42, 38, 5], [1244, 1105, 26, 34],
    [1235, 1255, 30, 38], [1130, 1232, 24, 24], [1218, 1335, 42, 38], [1218, 1370, 42, 34], [1240, 1403, 26, 18], [1350, 1335, 40, 34, 10],
    [1350, 1358, 34, 34, 10], [1345, 1302, 44, 18, 5], [1365, 1275, 30, 44, 8], [1455, 1418, 48, 38], [1482, 1374, 22, 18], [1460, 1262, 44, 36, 5], [1505, 1278, 38, 42, 5],
    [145, 105, 16, 30, 10], [140, 135, 22, 30, 10], [130, 190, 26, 34, 10], [122, 230, 20, 30, 10], [112, 275, 14, 18], [155, 5, 20, 12], [53, 122, 14, 16], [56, 32, 14, 22],
    [36, 167, 20, 20], [27, 205, 14, 30], [93, 413, 20, 38, 5], [73, 480, 22, 30, 5], [70, 508, 18, 26, 5], [35, 937, 28, 36, 5], [180, 435, 14, 10], [213, 428, 12, 10], [27, 715, 16, 22, 20],
  ],
  D: [
    [150, 75, 46, 54, 38], [105, 157, 44, 54, 42], [160, 200, 34, 26, 22], [213, 228, 26, 24, 20], [258, 264, 26, 12, 5], [78, 250, 48, 42, 20],
    [5, 225, 28, 30, 25], [27, 298, 44, 30, 8], [23, 326, 44, 30, 8], [32, 390, 50, 36], [33, 432, 54, 44], [57, 470, 54, 26, 3], [20, 55, 38, 50, 35], [232, 744, 8, 8],
  ],
};

const PINK_LINES = [
  "C 1300,195 1420,270",
  "C 1020,805 1265,812",
  "C 1065,990 1270,1025",
  "C 445,1078 670,1130",
  "B 5,975 265,790",
  "C 820,1025 860,1040",
  "C 1350,430 1440,460",
];

const RED_DOTS = [
  "B 268,800 312,882",
  "B 302,912 345,965",
  "B 240,955 330,1060",
  "B 360,975 392,1018",
  "B 415,930 458,968",
  "D 212,1072 214,1135 330,1142",
];

type MapLabel = { id: string; text: string; path: string; size?: number; tone?: string; halo?: string };

const LABELS: MapLabel[] = [
  { id: "l1", text: "Neckarsulmer Str.", path: "A 703,898 714,1150 729,1430", halo: "none", size: 20.2 },
  { id: "l2", text: "Str.", path: "A 628,463 634,570", halo: "none", size: 20.5 },
  { id: "l3", text: "Am Sandweg", path: "A 338,1410 362,1200 386,1050", size: 18.4 },
  { id: "l4", text: "Binswanger Str.", path: "C 1163,388 1225,268 1310,165 1435,30", halo: "none", size: 19.4 },
  { id: "l5", text: "Mettelbachstr.", path: "C 1306,606 1325,520 1370,405 1465,275", size: 17.9 },
  { id: "l6", text: "Mettelbachstr.", path: "C 1286,725 1400,706 1500,702 D 60,527 140,532", size: 18.4 },
  { id: "l7", text: "Kirschengartenstr.", path: "C 957,1188 1100,1212 1230,1228 1460,1236", size: 18.2 },
  { id: "l8", text: "Luise-Bu", path: "C 974,1243 980,1340 995,1480", size: 18.2 },
  { id: "l9", text: "Str.", path: "C 736,1445 780,1330", halo: "none", size: 20.5 },
  { id: "l10", text: "Auhang", path: "B 396,363 480,335 600,294", size: 18.2, tone: "#444" },
  { id: "l11", text: "Auhang", path: "B 1028,228 1110,256 1240,322", size: 18.2, tone: "#444" },
  { id: "l12", text: "Kindsberg", path: "D 337,714 430,640 560,530", size: 18, tone: "#555", halo: "#efe3cf" },
  { id: "l13", text: "Panoramaweg", path: "D 922,618 960,570 1060,492 1230,382", size: 18, tone: "#555", halo: "#efe3cf" },
];

function StreetMap() {
  return (
    <svg className="block" width={1024} height={800} viewBox="1646 688 1024 800" aria-label="Karte">
      <defs>
        <pattern id="dots" width="16" height="16" patternUnits="userSpaceOnUse">
          <circle cx="5" cy="4.700" r="2" fill="#e6f0df" />
        </pattern>
        <pattern id="vines" width="16" height="16" patternUnits="userSpaceOnUse">
          <path d="M1.300 11v5M1.300 0v3.500M9.300 3.500v8" stroke="#93c98b" strokeWidth="1.300" />
        </pattern>
        <linearGradient id="pin" x1="0" y1="0" x2="0" y2="1">
          <stop offset="0" stopColor="#4a9ad4" />
          <stop offset="0.600" stopColor="#1c74c2" />
          <stop offset="1" stopColor="#1a6fc6" />
        </linearGradient>
        <filter id="soft" x="-50%" y="-50%" width="200%" height="200%">
          <feGaussianBlur stdDeviation="4" />
        </filter>
        {LABELS.map((l) => (
          <path key={l.id} id={l.id} d={line(l.path)} />
        ))}
      </defs>

      {/* land use */}
      <rect x="1646" y="688" width="1024" height="800" fill="#c9e1bf" />
      <rect x="1646" y="688" width="1024" height="800" fill="url(#dots)" />
      <path d={area("A 10,430 425,430 430,700 395,1100 365,1440 300,1440 312,1275 10,1268")} fill="#ebdbe8" />
      <path d={line("A 360,1440 C 345,130 315,320 255,600 165,950 95,1220 43,1445")} stroke="#ebdbe8" strokeWidth="10" fill="none" />
      <path d={area("C 360,222 583,218 640,470 655,640 650,1000 615,1265 425,1228 410,1305 545,1350 560,1440 40,1440 100,1220 175,950 265,600 320,320")} fill="#f2dad9" />
      {SCRUB.slice(0, 3).map((s) => (
        <path key={s} d={area(s)} fill="#c8d7ab" />
      ))}
      <path d={area(RESIDENTIAL)} fill="#dfdfdf" stroke="#d2d0cf" strokeWidth="1" />
      {VINEYARDS.map((v) => (
        <g key={v}>
          <path d={area(v)} fill="#aee0a3" />
          <path d={area(v)} fill="url(#vines)" />
        </g>
      ))}
      <path d={area("B 1260,705 1400,665 1505,1120 1405,1125")} fill="#c9e1bf" />
      <path d={area("B 1260,705 1400,665 1505,1120 1405,1125")} fill="url(#dots)" />
      <path d={area(FOREST)} fill="#add19e" />
      <path d={area(SCRUB[3])} fill="#c8d7ab" />
      <path d={area("C 862,1185 1158,1205 1158,1440 875,1440 850,1300")} fill="#c7c7b4" />
      <path d={area("B 205,95 310,28 373,200 265,235")} fill="#ead8bb" stroke="#d9bd9a" strokeWidth="1" />
      <path d={area("B 272,785 310,767 355,855 322,875")} fill="#dffce2" stroke="#8fd6a5" strokeWidth="1" />
      <path d={area("B 1155,255 1270,285 1165,330")} fill="#cdebb0" />
      <path d={area("C 95,292 247,318 235,405 85,378")} fill="#ececec" stroke="#ddd0ce" strokeWidth="1" />
      <path d={line("C 88,338 130,345 165,355 245,365")} stroke="#c4c4c4" strokeWidth="1" fill="none" />
      <path d={area("C 10,758 102,778 95,812 10,812")} fill="#ececec" stroke="#ddd0ce" strokeWidth="1" />
      <path d={area("C 920,738 972,748 955,822 905,808")} fill="#eeeeee" stroke="#e0b8b8" strokeWidth="1" strokeDasharray="3 2" />
      <path d={area("D 182,1180 330,1160 410,1200 415,1260 182,1260")} fill="#ead8bb" />

      {/* ponds */}
      <g stroke="#a5cfe0" strokeWidth="4">
        <path
          d={["B 655,54 748,54", "B 655,78 752,78", "B 660,102 758,102", "B 665,126 765,126", "B 670,150 745,150", "B 675,174 775,174", "B 810,30 900,30", "B 813,54 903,54", "B 817,78 908,78", "B 820,102 912,102", "B 825,126 885,126"].map(line).join("")}
        />
      </g>
      <path d={area("D 128,365 193,365 187,473 121,473")} fill="#f3ece4" />
      <g stroke="#a5cfe0" strokeWidth="4.300">
        <path d={["D 128,371 193,371", "D 126,396 192,396", "D 125,420 190,420", "D 123,444 189,444", "D 122,468 187,468"].map(line).join("")} />
      </g>
      <path d={line("D 622,512 893,652")} stroke="#9ccbe0" strokeWidth="3" fill="none" />

      {/* buildings */}
      <g fill="#d9d0c9" stroke="#c3ab9e" strokeWidth="1.200">
        {BUILDING_SHAPES.map((b) => (
          <path key={b} d={area(b)} />
        ))}
        {Object.entries(HOUSES).flatMap(([sheet, list]) =>
          list.map(([x, y, w, h, rot = 0], i) => {
            const [ox, oy, sx, sy] = SHEETS[sheet];
            const cx = r1(ox + x / sx);
            const cy = r1(oy + y / sy);
            return (
              <rect
                key={`${sheet}${i}`}
                x={r1(cx - w / sx / 2)}
                y={r1(cy - h / sy / 2)}
                width={r1(w / sx)}
                height={r1(h / sy)}
                transform={`rotate(${rot} ${cx} ${cy})`}
              />
            );
          })
        )}
        <rect x="2334" y="806" width="7" height="15" fill="none" transform="rotate(-15 2338 813)" />
      </g>

      {/* small ways */}
      <g fill="none">
        <g stroke="#fff" strokeOpacity="0.500" strokeWidth="4.500">
          {FOOTWAYS.map((f) => (
            <path key={f} d={line(f)} />
          ))}
        </g>
        <g stroke="#b08530" strokeWidth="2.800" strokeDasharray="22 7">
          {FOOTWAYS.slice(0, 4).map((f) => (
            <path key={f} d={line(f)} />
          ))}
          <path d={line(FOOTWAYS[8])} />
        </g>
        <g stroke="#b08530" strokeWidth="3" strokeDasharray="7 9">
          {FOOTWAYS.slice(4, 8).map((f) => (
            <path key={f} d={line(f)} />
          ))}
        </g>
        <g stroke="#6d6d6d" strokeWidth="1.600" strokeDasharray="9 5">
          <path d={line("A 10,1275 310,1287")} />
          <path d={line("A 50,1285 30,1440 C 20,60")} />
          <path d={line("C 10,333 95,340")} />
        </g>
        <g>
          {PINK_LINES.map((p) => (
            <g key={p}>
              <path d={line(p)} stroke="#f6b3b3" strokeWidth="4.500" />
              <path d={line(p)} stroke="#fff4f2" strokeWidth="2.200" />
            </g>
          ))}
          {RED_DOTS.map((p) => (
            <g key={p}>
              <path d={line(p)} stroke="#f6dcdc" strokeWidth="7" />
              <path d={line(p)} stroke="#f4969e" strokeWidth="6" strokeDasharray="2.500 2.500" />
            </g>
          ))}
        </g>
      </g>

      {/* roads */}
      <g fill="none" strokeLinejoin="round">
        {TRACKS.map((t) => (
          <path key={t} d={line(t)} stroke="#bd9c5c" strokeWidth="7.600" />
        ))}
        {STREETS.map(([s, w]) => (
          <path key={s} d={line(s)} stroke="#cbc9c7" strokeWidth={w + 1.4} strokeLinecap="round" />
        ))}
        <circle cx="1798" cy="1218.300" r="10.500" fill="#cbc9c7" />
        <circle cx="1779.300" cy="1366.700" r="10.500" fill="#cbc9c7" />
        {TRACKS.map((t) => (
          <path key={t} d={line(t)} stroke="#fffdf8" strokeWidth="4.200" strokeLinecap="round" />
        ))}
        {STREETS.map(([s, w]) => (
          <path key={s} d={line(s)} stroke="#fff" strokeWidth={w} strokeLinecap="round" />
        ))}
        <circle cx="1798" cy="1218.300" r="9.800" fill="#fff" />
        <circle cx="1779.300" cy="1366.700" r="9.800" fill="#fff" />

        <path d={line(RAIL)} stroke="#e4dde2" strokeWidth="12" />
        <path d={line(RAIL)} stroke="#707070" strokeWidth="10.500" />
        <path d={line(RAIL)} stroke="#f2f2f2" strokeWidth="5.500" strokeDasharray="13 13" />
        <path d={line(RAIL)} stroke="#707070" strokeWidth="1.800" />

        <path d={line("C 655,640 668,800 675,1000 676,1250 618,1445")} stroke="#a35bd6" strokeWidth="6" />
        <path d={line("C 655,640 668,800 675,1000 676,1250 618,1445")} stroke="#e0bdf5" strokeWidth="2.800" />
        <path d={line("C 645,1350 655,1400")} stroke="#b06be0" strokeWidth="3" />

        <path d={line(MAIN_ROAD)} stroke="#b38a35" strokeWidth="20.500" />
        <path d={line(MOTORWAY)} stroke="#e0447a" strokeWidth="36" />
        <path d={line(MAIN_ROAD)} stroke="#fcd6a4" strokeWidth="17.800" />
        <path d={line(MOTORWAY)} stroke="#e892a2" strokeWidth="33.500" />
        <path d={line("A 724,430 745,720 757,900 778,1215 790,1440 C 820,500 832,640")} stroke="#b35fdc" strokeWidth="2.200" strokeDasharray="26 5" />
        <path d={line("A 729,430 750,720 762,900 783,1215 796,1440 C 826,500")} stroke="#f3e9f2" strokeWidth="1.400" />
        <path d={line("C 828,1060 818,1130 800,1240 760,1440")} stroke="#c93aa0" strokeWidth="1.800" strokeDasharray="5 3" />
      </g>

      {/* direction arrows */}
      <g fill="#a4164f">
        {[
          [1875.3, 766.5, 0], [1867, 835, 180], [1905.3, 1216, 0], [1890.7, 1229.5, 180], [1888.5, 1450, 10],
        ].map(([x, y, rot]) => (
          <path key={`${x}`} transform={`translate(${x} ${y}) rotate(${rot})`} d="M0-12l3.600 8h-2v16h-3.200v-16h-2z" />
        ))}
      </g>

      {/* bus stops */}
      <g fill="#0092da">
        <rect x="1994" y="1160" width="12" height="12" />
        <rect x="1986" y="1224.300" width="12" height="12" />
        <rect x="1876" y="1350" width="12" height="12" />
        <rect x="1908" y="1358" width="12" height="12" />
      </g>

      {/* scrub tufts */}
      <g fill="none" stroke="#9fb586" strokeWidth="1.200">
        {[[1893, 705], [1859, 1109], [1875, 1213], [1871, 1241], [1817, 1445], [2219, 1226]].map(([x, y]) => (
          <path key={`${x}-${y}`} d={`M${x - 6} ${y}h12M${x} ${y}v-10M${x} ${y}l-5-6M${x} ${y}l5-6`} />
        ))}
      </g>

      {/* labels */}
      <g className="font-['Noto_Sans',sans-serif]">
        {LABELS.map((l) => (
          <text
            key={l.id}
            fontSize={l.size ?? 19}
            fill={l.tone ?? "#2a1f22"}
            stroke={l.halo ?? "#ffffff"}
            strokeWidth="3.500"
            strokeLinejoin="round"
            paintOrder="stroke"
          >
            <textPath href={`#${l.id}`}>{l.text}</textPath>
          </text>
        ))}
        <g fill="#5c8f5c" stroke="#e7f2e0" strokeWidth="2.500" paintOrder="stroke" className="italic" fontSize="22.500" textAnchor="end">
          <text x="1689" y="1209">nlage</text>
          <text x="1689" y="1238">unde</text>
        </g>
        <rect x="1831.500" y="783.500" width="65" height="37" rx="4" fill="#efc900" stroke="#e5c100" strokeWidth="2" />
        <rect x="1832.500" y="784.500" width="63" height="35" rx="4" fill="#efc900" stroke="#4f4100" strokeWidth="2.500" />
        <text x="1864.500" y="809.500" textAnchor="middle" fontSize="21" className="font-medium" fill="#2d2600">B 27</text>
      </g>

      {/* marker */}
      <path d="M2159 1087L2176 1052Q2190 1034 2206 1042Q2216 1050 2200 1066Z" fill="#000" fillOpacity="0.380" filter="url(#soft)" />
      <g transform="translate(2134 1006) scale(2)">
        <path
          d="M12.500.700C5.800.700.700 5.900.700 12.500c0 2.700 1 5.500 2.300 8.200l9.500 19.800 9.500-19.800c1.300-2.700 2.300-5.500 2.300-8.200C24.300 5.900 19.200.7 12.500.7z"
          fill="url(#pin)"
          stroke="#2e6da4"
          strokeWidth="0.900"
        />
        <circle cx="12.500" cy="12.800" r="4.500" fill="#fff" stroke="#2a6ea8" strokeWidth="1.100" />
      </g>
    </svg>
  );
}

/* ------------------------------------------------------------------ */
/* Page                                                                */
/* ------------------------------------------------------------------ */

type NavEntry = { label: string; icon: IconName | "editor"; active?: boolean };

const MAIN_NAV: NavEntry[] = [
  { label: "Struktur", icon: "folderOpen" },
  { label: "Termine", icon: "calendar", active: true },
  { label: "Medienpool", icon: "image" },
  { label: "Templates", icon: "newspaper" },
  { label: "Module", icon: "database" },
  { label: "Benutzer", icon: "user" },
  { label: "AddOns", icon: "bookmark" },
  { label: "System", icon: "cogs" },
  { label: "Installer", icon: "key" },
  { label: "Test Events", icon: "bookmark" },
];

const ADDON_NAV: NavEntry[] = [
  { label: "2 Faktor Setup", icon: "key" },
  { label: "Adminer", icon: "database" },
  { label: "Backup", icon: "hdd" },
  { label: "blÖcks", icon: "newspaper" },
  { label: "CKEditor 5", icon: "editor" },
  { label: "Cookie-Gedöns", icon: "coffee" },
  { label: "Cronjobs", icon: "code" },
  { label: "Developer", icon: "bookmark" },
  { label: "Feeds", icon: "rss" },
  { label: "MBlock", icon: "train" },
  { label: "Media Manager", icon: "image" },
];

function NavList({ items }: { items: NavEntry[] }) {
  return (
    <ul className="flex flex-col gap-1">
      {items.map((item) => (
        <li key={item.label}>
          <a
            className={
              item.active
                ? "flex h-[72px] items-center bg-[#4b9ad9] pl-[10px] text-white"
                : item.icon === "editor"
                  ? "flex h-[74px] items-center pl-[10px] text-[#9ca5b2]"
                  : "flex h-[72px] items-center pl-[10px] text-[#9ca5b2]"
            }
          >
            <span className="flex w-[47.5px] shrink-0">{item.icon === "editor" ? <EditorIcon /> : <Icon name={item.icon} />}</span>
            <span className="pt-0.5">{item.label}</span>
          </a>
        </li>
      ))}
    </ul>
  );
}

function Tab({ icon, label, active = false }: { icon: IconName; label: string; active?: boolean }) {
  return (
    <li
      className={
        active
          ? "flex h-[86px] items-center gap-[7.5px] rounded-t-[6px] border-x-2 border-t-4 border-x-[#dfe3e9] border-t-[#4b9ad9] bg-white px-[30px] pb-[2px]"
          : "flex h-[84px] items-center gap-[7.5px] rounded-t-[6px] border-x-2 border-t-4 border-x-[#dfe3e9] border-t-[#9ca5b2] bg-[#dfe2ea] px-[30px]"
      }
    >
      <Icon name={icon} />
      <span className="pt-0.5">{label}</span>
    </li>
  );
}

function Label({ children }: { children: React.ReactNode }) {
  return <div className="mb-[10px] h-10 font-bold leading-[42px]">{children}</div>;
}

function Field({ label, value, hint, example }: { label: string; value: string; hint?: string; example?: string }) {
  return (
    <div className="w-full">
      <Label>{label}</Label>
      <div className="flex h-[68px] items-center border-2 border-[#c1c9d4] bg-[#f3f6fb] px-6 shadow-[inset_0_2px_2px_rgba(0,0,0,0.075)]">
        <span className="pt-0.5">{value}</span>
      </div>
      {hint && (
        <p className="mt-[11px] flex h-[39px] items-center whitespace-pre text-[#6885a3]">
          <span>{hint} </span>
          <code className="mt-[2px] flex h-[38px] items-center rounded-[2px] bg-[#f9f2f4] px-[7px] font-['DejaVu_Sans_Mono',monospace] text-[23.2px] text-[#c7254e]">
            {example}
          </code>
        </p>
      )}
    </div>
  );
}

export default function App() {
  return (
    <div className="flex h-[2048px] w-[2732px] flex-col overflow-hidden bg-[#f3f6fb] font-['Liberation_Sans',Arial,sans-serif] text-[28px] leading-10 text-[#324050]">
      <header className="flex h-[140px] shrink-0 items-start justify-between bg-[#4b9ad9] px-[30px]">
        <div className="-ml-[2px] pt-[20px]">
          <Logo />
        </div>
        <div className="flex h-[137px] items-center">
          <span className="pt-px">Angemeldet als</span>
          <a className="ml-[38px] flex items-center gap-[6px] text-white">
            <Icon name="user" />
            <span className="pt-px">Administrator</span>
          </a>
          <a className="ml-[60px] flex items-center gap-[9.5px] text-white">
            <Icon name="signOut" />
            <span className="pt-px">abmelden</span>
          </a>
        </div>
      </header>

      <div className="flex min-h-0 flex-1">
        <nav className="w-[500px] shrink-0 overflow-hidden bg-[#324050] px-[30px] pt-[78px]">
          <h4 className="mb-10 text-[36px] leading-10 text-[#f3f6fb]">Hauptmenü</h4>
          <NavList items={MAIN_NAV} />
          <hr className="mt-[30px] h-[2px] border-0 bg-[#4f5d6e]" />
          <h4 className="mb-10 mt-12 text-[36px] leading-10 text-[#f3f6fb]">AddOns</h4>
          <NavList items={ADDON_NAV} />
        </nav>

        <main className="min-w-0 flex-1 px-[30px] pt-[64px]">
          <h1 className="h-[60px] text-[48px] leading-[60px]">Termine</h1>

          <div className="mt-[56px] flex h-[86px] items-start justify-between border-b-2 border-[#dfe3e9]">
            <ul className="flex gap-1">
              <Tab icon="calendar" label="Übersicht" />
              <Tab icon="flag" label="Sprachen" />
              <Tab icon="calendarO" label="Termine" />
              <Tab icon="folder" label="Kategorien" />
              <Tab icon="marker" label="Location" active />
            </ul>
            <ul className="flex gap-1">
              <Tab icon="info" label="Docs" />
              <Tab icon="cog" label="Settings" />
            </ul>
          </div>

          <section className="mt-10 border-2 border-[#3cb594] bg-[#dff4ec] shadow-[0_2px_2px_rgba(0,0,0,0.05)]">
            <h2 className="flex h-[82px] items-center bg-[#3cb594] px-[30px] pb-[3px] text-[32px] text-white">Datensatz editieren [id: 1]</h2>
            <div className="px-[30px] pb-[30px] pt-[30px]">
              <div className="flex gap-[60px]">
                <div className="flex w-[1024px] flex-col gap-[30px]">
                  <Field label="Name" value="Konzertbühne" hint="Name des Veranstaltungsorts, z.B." example="Zahlemann und Söhne GmbH & Co. KG" />
                  <Field label="Adresse" value="Mettelbachstr. 40" hint="Bitte Straßennamen und Hausnummer eingeben, z.B." example="Alexanderplatz 1" />
                  <Field label="PLZ" value="74076" hint="Bitte gültige Postleitzahl eingeben, z.B." example="10115" />
                  <Field label="Stadt" value="Heilbronn" hint="Bitte Namen der Stadt angeben, z.B:" example="Berlin" />
                </div>

                <div className="w-[1024px]">
                  <Label>Standort</Label>
                  <button className="flex h-[68px] w-[700px] items-center justify-center rounded-[8px] bg-[#dddddd] pt-0.5 tracking-[0.03px]">
                    Geo-Koordinaten anhand von Adressdaten ermitteln
                  </button>
                  <div className="relative mt-[10px] h-[800px] overflow-hidden">
                    <StreetMap />
                    <div className="absolute left-5 top-5 w-[68px] rounded-[8px] border-4 border-black/20 bg-white bg-clip-padding">
                      <div className="flex h-[60px] items-center justify-center border-b-2 border-[#cccccc] pl-0.5 pt-0.5">
                        <svg width="24" height="24" viewBox="0 0 24 24" aria-label="Zoom in">
                          <path d="M12 0v24M0 12h24" stroke="#000" strokeWidth="3.800" />
                        </svg>
                      </div>
                      <div className="flex h-[60px] items-center justify-center pl-0.5">
                        <svg width="24" height="24" viewBox="0 0 24 24" aria-label="Zoom out">
                          <path d="M0 12h24" stroke="#000" strokeWidth="3.800" />
                        </svg>
                      </div>
                    </div>
                    <div className="absolute bottom-0 right-0 h-8 whitespace-pre bg-white/70 px-[10px] text-[22px] leading-[34px] text-[#333333]">
                      <a className="text-[#0078a8]">Leaflet</a> | Map data © <a className="text-[#0078a8]">OpenStreetMap</a> contributors
                    </div>
                  </div>
                  <div className="mt-[30px] flex gap-[60px]">
                    <Field label="Breitengrad (lat)" value="49.16204485" />
                    <Field label="Längengrad (lng)" value="9.229177342710774" />
                  </div>
                </div>
              </div>

              <div className="mt-[30px]">
                <Label>Staat</Label>
                <div className="flex h-16 items-center justify-between border-2 border-[#c1c9d4] bg-[#f3f6fb] pl-8 pr-3 shadow-[inset_0_2px_2px_rgba(0,0,0,0.075)]">
                  <span className="pt-0.5">DE</span>
                  <svg width="12" height="12" viewBox="0 0 12 12" aria-hidden="true">
                    <path d="M0 0h12L6 12z" fill="#324050" />
                  </svg>
                </div>
              </div>
            </div>
            <div className="mb-[10px] flex h-[110px] gap-[10px] bg-[#dfe2ea] px-[30px] pt-[22px]">
              <button className="h-[68px] w-[174px] rounded-[8px] bg-[#3cb594] pt-0.5 text-white">speichern</button>
              <button className="h-[68px] w-[208px] rounded-[8px] bg-[#3cb594] pt-0.5 text-white">übernehmen</button>
            </div>
          </section>

          <section className="mt-10 h-[120px] border-2 border-[#2680cb] bg-[#4b9ad9] px-[30px] pt-[31px] font-bold text-white">
            <a className="underline decoration-2 underline-offset-[3px]">« Zurück zur Übersicht</a>
          </section>
        </main>
      </div>
    </div>
  );
}
